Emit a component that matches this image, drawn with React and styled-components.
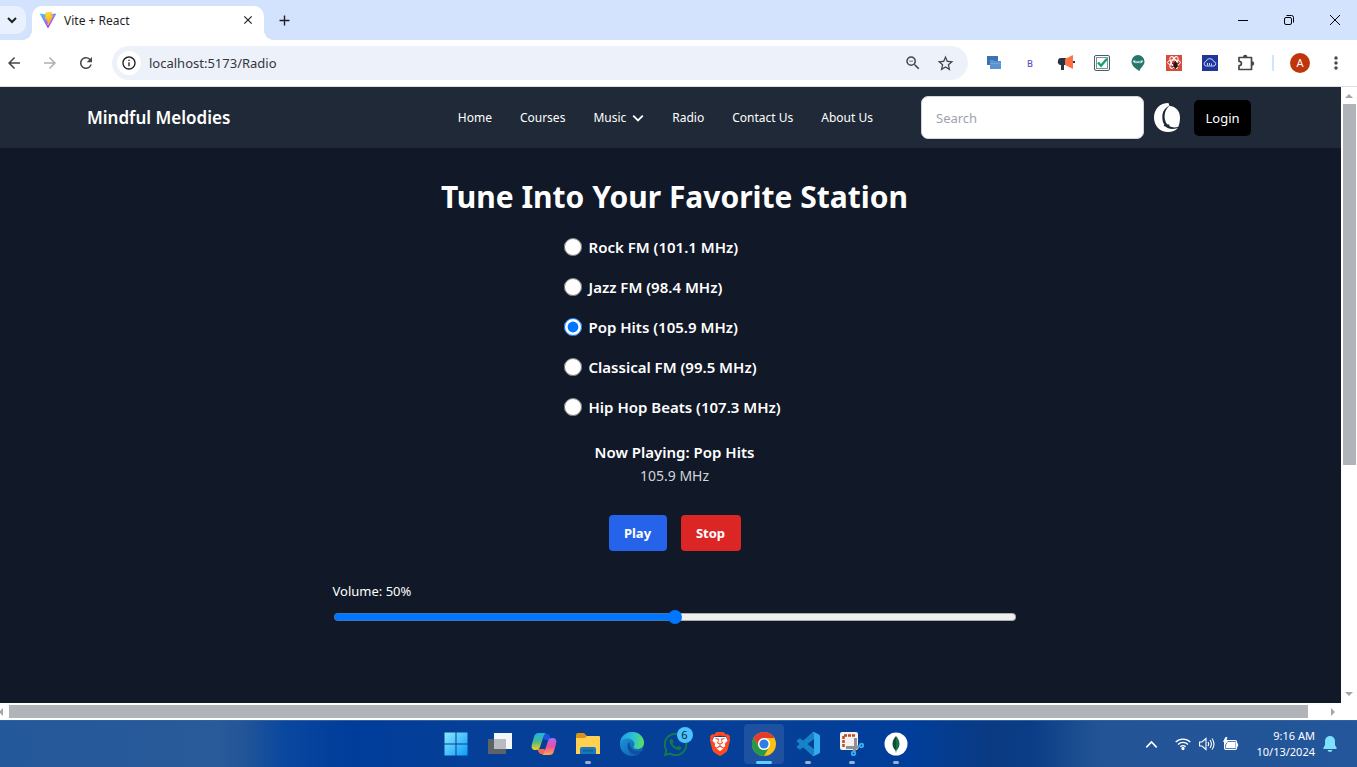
import React, { useState } from "react";
import styled, { createGlobalStyle } from "styled-components";
import {
  MdArrowBack, MdArrowForward, MdRefresh, MdInfoOutline, MdOutlineZoomOut,
  MdStarOutline, MdMoreVert, MdClose, MdAdd,
} from "react-icons/md";
import { FaWhatsapp } from "react-icons/fa";
import { SiBrave } from "react-icons/si";

const GlobalStyle = createGlobalStyle`
  * { box-sizing: border-box; }
  body { margin: 0; font-family: "Noto Sans", "Open Sans", sans-serif; }
  button { font: inherit; border: 0; padding: 0; background: none; cursor: pointer; }
  a { color: inherit; text-decoration: none; }
  svg { display: block; flex: none; }
`;

const Screen = styled.div`
  min-height: 100vh;
  display: flex;
  flex-direction: column;
  background: #fff;
`;

/* ---------- browser chrome ---------- */

const TabStrip = styled.div`
  height: 40px;
  display: flex;
  align-items: flex-end;
  background: #d3e2fd;
`;

const TabSearch = styled.button`
  width: 26px;
  height: 28px;
  margin-bottom: 6px;
  padding-right: 2px;
  display: flex;
  align-items: center;
  justify-content: center;
  border-radius: 0 10px 10px 0;
  background: #e9f0fe;
  color: #1f1f1f;
`;

const Tab = styled.div`
  position: relative;
  width: 232px;
  height: 34px;
  margin-left: 6px;
  padding: 0 10px 6px 8px;
  display: flex;
  align-items: center;
  gap: 8px;
  border-radius: 10px 10px 0 0;
  background: #fff;
  color: #1f1f1f;
  font-size: 12px;

  &::before,
  &::after {
    content: "";
    position: absolute;
    bottom: 0;
    width: 10px;
    height: 10px;
  }
  &::before {
    left: -10px;
    background: radial-gradient(circle at 0 0, transparent 10px, #fff 10px);
  }
  &::after {
    right: -10px;
    background: radial-gradient(circle at 100% 0, transparent 10px, #fff 10px);
  }
`;

const TabTitle = styled.span`
  flex: 1;
`;

const IconButton = styled.button`
  display: flex;
  align-items: center;
  justify-content: center;
  width: ${(p) => p.$size || 16}px;
  height: ${(p) => p.$size || 16}px;
  color: ${(p) => p.$color || "#1f1f1f"};
`;

const NewTab = styled(IconButton)`
  margin: 0 auto 12px 12px;
`;

const WindowControls = styled.div`
  align-self: stretch;
  display: flex;
`;

const WindowButton = styled.button`
  width: 46px;
  padding-left: 2px;
  display: flex;
  align-items: center;
  justify-content: center;
`;

const Toolbar = styled.div`
  height: 47px;
  padding: 0 12px 0 5px;
  display: flex;
  align-items: center;
  background: #fff;
  border-bottom: 1px solid #dcdfe4;
`;

const NavButtons = styled.div`
  display: flex;
  gap: 18px;
  margin-right: 17px;
`;

const AddressBar = styled.div`
  flex: 1;
  height: 34px;
  padding: 0 14px 0 5px;
  display: flex;
  align-items: center;
  gap: 14px;
  border-radius: 17px;
  background: #edf1fa;
`;

const SiteInfo = styled.button`
  width: 24px;
  height: 24px;
  display: flex;
  align-items: center;
  justify-content: center;
  border-radius: 50%;
  background: #fff;
  color: #1f1f1f;
`;

const AddressInput = styled.input`
  flex: 1;
  min-width: 0;
  margin-left: -6px;
  padding: 0;
  border: 0;
  outline: 0;
  background: transparent;
  color: #33363b;
  font: 13px "Noto Sans", sans-serif;
`;

const Extensions = styled.div`
  display: flex;
  align-items: center;
  gap: 16px;
  margin: 0 16px;
`;

const LetterExtension = styled(IconButton)`
  font-size: 9px;
  font-weight: 500;
`;

const Divider = styled.span`
  width: 2px;
  height: 16px;
  background: #d3e2fd;
`;

const Profile = styled.button`
  width: 20px;
  height: 20px;
  margin: 0 17px 0 16px;
  border-radius: 50%;
  background: #bf360c;
  color: #fff;
  font-size: 11px;
  line-height: 20px;
`;

/* ---------- scrollable page frame ---------- */

const Viewport = styled.div`
  flex: 1;
  display: grid;
  grid-template-columns: minmax(0, 1fr) 16px;
  grid-template-rows: 1fr 17px;
`;

const Site = styled.div`
  background: #111827;
  color: #fff;
`;

const VerticalBar = styled.div`
  display: flex;
  flex-direction: column;
  align-items: center;
  gap: 4px;
  padding: 5px 0;
`;

const VerticalThumb = styled.div`
  width: 13px;
  height: 361px;
  margin-bottom: auto;
  background: #b0b3b8;
`;

const HorizontalBar = styled.div`
  display: flex;
  align-items: center;
  padding-right: 4px;
  gap: 6px;
`;

const HorizontalThumb = styled.div`
  flex: 1;
  height: 13px;
  margin-right: 15px;
  background: #b0b3b8;
`;

/* ---------- site ---------- */

const Header = styled.header`
  min-height: 61px;
  padding: 0 90px 0 87px;
  display: flex;
  align-items: center;
  background: #1f2937;
`;

const Brand = styled.a`
  margin-right: auto;
  font-size: 17px;
  font-weight: 600;
`;

const Menu = styled.nav`
  display: flex;
  align-items: center;
  gap: 28px;
  margin-right: 48px;
  font-size: 12px;
`;

const MenuLink = styled.a`
  display: flex;
  align-items: center;
  gap: 6px;
`;

const Search = styled.input`
  width: 223px;
  height: 43px;
  padding: 0 14px;
  border: 1px solid #d1d5db;
  border-radius: 7px;
  background: #fff;
  font: 13px "Noto Sans", sans-serif;
  &::placeholder { color: #9ca3af; }
`;

const ThemeToggle = styled.button`
  margin: 0 14px 0 10px;
`;

const LoginButton = styled.button`
  width: 57px;
  height: 36px;
  border-radius: 5px;
  background: #000;
  color: #fff;
  font-size: 13px;
`;

const Main = styled.main`
  display: flex;
  flex-direction: column;
  align-items: center;
  padding: 29px 0 60px 8px;
`;

const Title = styled.h1`
  margin: 0 0 10px;
  font-size: 30px;
  line-height: 40px;
  font-weight: 700;
`;

const Stations = styled.div`
  width: 222px;
  display: flex;
  flex-direction: column;
`;

const Station = styled.label`
  height: 40px;
  display: flex;
  align-items: center;
  gap: 7px;
  font-size: 15px;
  font-weight: 600;
  white-space: nowrap;
`;

const Radio = styled.input`
  width: 18px;
  height: 18px;
  margin: 0;
  accent-color: #0075ff;
`;

const NowPlaying = styled.h2`
  margin: 12px 0 0;
  font-size: 15px;
  line-height: 26px;
  font-weight: 600;
`;

const Frequency = styled.p`
  margin: 0;
  font-size: 14px;
  line-height: 22px;
  color: #d1d5db;
`;

const Controls = styled.div`
  display: flex;
  gap: 14px;
  margin: 28px 0;
`;

const ControlButton = styled.button`
  width: ${(p) => p.$width}px;
  height: 36px;
  border-radius: 4px;
  background: ${(p) => p.$color};
  color: #fff;
  font-size: 13px;
  font-weight: 700;
`;

const Volume = styled.div`
  width: 100%;
  max-width: 684px;
`;

const VolumeLabel = styled.label`
  display: block;
  font-size: 13px;
  line-height: 24px;
`;

const Slider = styled.input`
  display: block;
  appearance: none;
  width: calc(100% - 2px);
  height: 14px;
  margin: 7px 1px 0;
  background: transparent;

  &::-webkit-slider-runnable-track {
    height: 8px;
    border: 1px solid rgba(118, 118, 118, 0.55);
    border-radius: 4px;
    background: linear-gradient(to right, #0075ff var(--fill), #efefef var(--fill)) border-box;
  }
  &::-webkit-slider-thumb {
    appearance: none;
    width: 14px;
    height: 14px;
    margin-top: -4px;
    border-radius: 50%;
    background: #0075ff;
  }
`;

/* ---------- taskbar ---------- */

const Taskbar = styled.footer`
  height: 47px;
  padding-right: 6px;
  display: grid;
  grid-template-columns: 1fr auto 1fr;
  border-top: 1px solid #33609f;
  background: linear-gradient(
    to right,
    #23589a 0%, #295a99 16%, #225598 18%, #09479f 21%, #003c9b 26%, #053f97 34%,
    #053f97 58%, #003e9b 67%, #0a3a82 73%, #0a3d86 76%, #225496 81%, #23569a 100%
  );
  color: #fff;
`;

const Apps = styled.div`
  grid-column: 2;
  display: flex;
  align-items: center;
  gap: 4px;
`;

const AppButton = styled.button`
  position: relative;
  width: 40px;
  height: 40px;
  display: flex;
  align-items: center;
  justify-content: center;
  border-radius: 4px;
  background: ${(p) => (p.$active ? "rgba(255,255,255,0.1)" : "none")};
  &::after {
    content: "";
    position: absolute;
    bottom: 0;
    width: ${(p) => (p.$active ? 16 : 6)}px;
    height: 3px;
    border-radius: 2px;
    background: ${(p) => (p.$active ? "#60cdff" : p.$running ? "#9db0d4" : "transparent")};
  }
`;

const Badge = styled.span`
  position: absolute;
  top: 3px;
  right: 3px;
  width: 16px;
  height: 16px;
  border-radius: 50%;
  background: #4cc2ff;
  color: #0a2233;
  font-size: 11px;
  line-height: 16px;
`;

const Tray = styled.div`
  justify-self: end;
  display: flex;
  align-items: center;
  gap: 17px;
  padding-right: 14px;
`;

const StatusIcons = styled.div`
  display: flex;
  gap: 8px;
`;

const ClockGroup = styled.div`
  display: flex;
  align-items: center;
  gap: 8px;
`;

const Clock = styled.time`
  text-align: right;
  font-size: 11px;
  line-height: 16px;
`;

const stations = [
  { name: "Rock FM", frequency: "101.1 MHz" },
  { name: "Jazz FM", frequency: "98.4 MHz" },
  { name: "Pop Hits", frequency: "105.9 MHz" },
  { name: "Classical FM", frequency: "99.5 MHz" },
  { name: "Hip Hop Beats", frequency: "107.3 MHz" },
];

const Chevron = ({ size = 10, width = 2, up }) => (
  <svg width={size} height={size} viewBox="0 0 10 10" fill="none" stroke="currentColor" strokeWidth={width}>
    <path d={up ? "M1 7.2 5 3l4 4.2" : "M1 3l4 4 4-4"} />
  </svg>
);

const Arrow = ({ d, w = 8, h = 8 }) => (
  <svg width={w} height={h} viewBox={`0 0 ${w} ${h}`}><path d={d} fill="#a3a5a8" /></svg>
);

const ViteIcon = () => (
  <svg width="16" height="16" viewBox="0 0 32 32">
    <defs>
      <linearGradient id="va" x1="0" y1="0" x2="0.6" y2="1"><stop stopColor="#41d1ff" /><stop offset="1" stopColor="#bd34fe" /></linearGradient>
      <linearGradient id="vb" x1="0.4" y1="0" x2="0.6" y2="1"><stop stopColor="#ffdd35" /><stop offset="1" stopColor="#ffa800" /></linearGradient>
    </defs>
    <path fill="url(#va)" d="M31.8 4.800 17 31.300a1.200 1.200 0 0 1-2 0L.2 4.800A1.200 1.200 0 0 1 1.400 3L16 5.600 30.500 3a1.200 1.200 0 0 1 1.300 1.800Z" />
    <path fill="url(#vb)" stroke="#ffc21f" strokeWidth="1.500" d="M22.700 0 11.900 2.100a.6.6 0 0 0-.4.400l-.7 11.200a.5.5 0 0 0 .6.500l3-.700c.3 0 .5.200.5.500l-.9 4.400c0 .300.200.500.500.500l1.900-.600c.300 0 .6.200.5.500l-1.400 6.800c-.1.400.5.700.7.300L25.500 7.100c.2-.300-.1-.700-.5-.600l-3.200.6c-.300 0-.6-.200-.5-.5l2-6.100c.1-.3-.2-.6-.6-.5Z" />
  </svg>
);

const ScreensIcon = () => (
  <svg width="16" height="16" viewBox="0 0 16 16">
    <path fill="#3b73b0" d="M1 1h11v9H1z" />
    <path fill="#5b92d4" d="M4 5h3l1 1h7v8H4z" />
    <path fill="#6fa3df" d="M4 8h11v1H4z" />
  </svg>
);

const MegaphoneIcon = () => (
  <svg width="18" height="16" viewBox="0 0 18 16">
    <path fill="#263442" d="M1 6a3 3 0 0 1 3-3h5v7H7v5H4v-5a3 3 0 0 1-3-4Z" />
    <path fill="#ff7043" d="m8 4 8-4v14l-8-4Z" />
    <path fill="#263442" d="M16 6h2v2h-2z" />
  </svg>
);

const CheckIcon = () => (
  <svg width="16" height="16" viewBox="0 0 16 16" fill="none">
    <rect x=".5" y=".5" width="15" height="15" rx="1.500" stroke="#45606b" />
    <rect x="2.500" y="2.500" width="11" height="11" stroke="#7b9099" />
    <path d="m4 7.500 3 3.200 6-7" stroke="#10a469" strokeWidth="2.400" />
  </svg>
);

const PinIcon = () => (
  <svg width="16" height="16" viewBox="0 0 16 16">
    <path fill="#26766c" d="M8 0a6.500 6.500 0 0 1 6.500 6.500c0 4-4 6-5 9.500C6 14 1.500 11 1.500 6.500A6.500 6.500 0 0 1 8 0Z" />
    <path fill="#dff0ee" d="M3 5.500c1.500-.3 3 .2 5 1 2-.8 3.500-1.300 5-1-.2 1.800-1.200 2.800-3 2.800-1 0-1.600-.4-2-.8-.4.400-1 .8-2 .8-1.800 0-2.800-1-3-2.800Z" />
    <circle cx="6" cy="7" r=".8" fill="#26766c" /><circle cx="10" cy="7" r=".8" fill="#26766c" />
  </svg>
);

const ReactBugIcon = () => (
  <svg width="16" height="16" viewBox="0 0 16 16" fill="none">
    <path fill="#d84a3c" d="M0 0h16v16H0z" />
    <g stroke="#fff" strokeWidth="1"><ellipse cx="8" cy="7.500" rx="6.500" ry="2.600" /><ellipse cx="8" cy="7.500" rx="6.500" ry="2.600" transform="rotate(60 8 7.500)" /><ellipse cx="8" cy="7.500" rx="6.500" ry="2.600" transform="rotate(120 8 7.500)" /></g>
    <ellipse cx="9.500" cy="10" rx="2.200" ry="3" fill="#2b1715" />
    <path stroke="#2b1715" strokeWidth=".8" d="m6 8 7 4M6 12l7-4M9.500 6v8" />
  </svg>
);

const CloudIcon = () => (
  <svg width="16" height="16" viewBox="0 0 16 16" fill="none">
    <path fill="#1e3799" d="M0 0h16v16H0z" />
    <path stroke="#c5d3ff" d="M4 11a2.300 2.300 0 0 1 0-4.500 4 4 0 0 1 7.700 0A2.300 2.300 0 0 1 12 11Z" />
    <path stroke="#c5d3ff" d="M5.500 8v2.500M7.500 8v2.500M9.500 8.500v2" />
  </svg>
);

const PuzzleIcon = () => (
  <svg width="18" height="18" viewBox="0 0 18 18">
    <path fill="none" stroke="#474747" strokeWidth="1.700" strokeLinejoin="round" d="M2 3.500h12.500v12H2v-3.800c1.500 0 2.400-.9 2.400-2.200S3.500 7.300 2 7.300Z" />
    <path fill="#474747" d="M6 3a2.200 2.200 0 0 1 4.400 0ZM15 7.300a2.200 2.200 0 0 1 0 4.400Z" />
  </svg>
);

const MoonIcon = () => (
  <svg width="26" height="29" viewBox="0 0 26 29">
    <path fill="#fff" d="M14.500 0C6 0 0 6 0 14.500S6 29 14 29c4.500 0 7.500-1.600 9.800-4C25.300 21.500 26 18.500 26 14.500 26 8 22 3.500 15.500 3Z" />
    <path fill="#1f2937" d="M15.500 2.500C10.500 5 8.300 9 8.300 14c0 3 .6 5.500 2 7.500l-.6 1.500 1.800.6c2.500 2.600 7 3.200 12.300 1.400l.6-1.200c-3.400 1-6.400.9-8.900-.8l-.4-1.600-2-.2C9.400 16.500 9.500 8 15.500 2.500Z" />
  </svg>
);

const WindowsIcon = () => (
  <svg width="24" height="24" viewBox="0 0 24 24">
    <defs><linearGradient id="win" x1="0" y1="0" x2="1" y2="1"><stop stopColor="#8ceaff" /><stop offset="1" stopColor="#0a9cf5" /></linearGradient></defs>
    <path fill="url(#win)" d="M.5.500h11v11H.500zM12.500.500h11v11h-11zM.500 12.500h11v11H.500zM12.500 12.500h11v11h-11z" />
  </svg>
);

const TaskViewIcon = () => (
  <svg width="24" height="24" viewBox="0 0 24 24">
    <path fill="#5d6268" d="M0 7h18v15H0z" />
    <path fill="#f5f6f8" d="M6 1h18v16H6z" />
    <path fill="#b8bcc2" d="M6 7h12v10H6z" />
  </svg>
);

const CopilotIcon = () => (
  <svg width="26" height="24" viewBox="0 0 26 24">
    <defs>
      <linearGradient id="ca" x1="0" y1="0" x2="0" y2="1"><stop stopColor="#19b4f0" /><stop offset=".5" stopColor="#49b98e" /><stop offset="1" stopColor="#f5d21c" /></linearGradient>
      <linearGradient id="cb" x1="0" y1="0" x2="0" y2="1"><stop stopColor="#a46df2" /><stop offset=".5" stopColor="#ec4f9c" /><stop offset="1" stopColor="#ffa553" /></linearGradient>
    </defs>
    <path fill="#1a55db" d="M9 2h7c2 0 2.500 1 3 3l1 3h-6Z" />
    <path fill="#f26a4f" d="M6 17h7l5 5h-7c-3 0-3-2-5-5Z" />
    <path fill="url(#ca)" d="M8 1h7c-2 1-2.500 3-3 5l-3 9c-.6 2-2 3-4 3-4 0-5-2-4-6l2-7c1-3 2-4 5-4Z" />
    <path fill="url(#cb)" d="M18 23h-7c2-1 2.500-3 3-5l3-9c.6-2 2-3 4-3 4 0 5 2 4 6l-2 7c-1 3-2 4-5 4Z" />
  </svg>
);

const FolderIcon = () => (
  <svg width="24" height="24" viewBox="0 0 24 24">
    <path fill="#d99416" d="M0 3q0-2 2-2h6l3 3v6H0z" />
    <path fill="#ffd152" d="M0 6h9l2-2h12q1 0 1 1v17H0z" />
    <path fill="#1978bd" d="M4 22v-5q0-2 2-2h12q2 0 2 2v5z" />
    <path fill="#135f9b" d="M7 18h10v1.500H7z" />
  </svg>
);

const EdgeIcon = () => (
  <svg width="24" height="24" viewBox="0 0 24 24">
    <defs>
      <linearGradient id="ea" x1="0" y1=".4" x2="1" y2=".5"><stop stopColor="#239be8" /><stop offset=".6" stopColor="#31c5cb" /><stop offset="1" stopColor="#62de56" /></linearGradient>
      <linearGradient id="eb" x1="0" y1="0" x2="1" y2="1"><stop stopColor="#1b9de2" /><stop offset="1" stopColor="#0b57a8" /></linearGradient>
    </defs>
    <circle cx="12" cy="12" r="12" fill="url(#eb)" />
    <path fill="url(#ea)" d="M0 11C1 4 6 0 12 0c7 0 12 5 12 10.500 0 4-3 6.500-6.500 6.500-2.500 0-4-1-4-2 0-.8 1-1.300 1-3C14.500 9 11 6.500 7.500 6.500 4 6.500 1 8.500 0 11Z" />
    <path fill="#124f9e" d="M9.500 10C6 12 7 20 13.500 22.500c3 .5 6-1 8.500-4-6 2-12-.5-12.500-8.500Z" />
  </svg>
);

const BraveIcon = () => (
  <svg width="22" height="24" viewBox="1 0 22 24">
    <path fill="#fff" d="M6 5h12l2 4-4 9-4 3-4-3-4-9Z" />
    <SiBrave color="#fb4a24" size={24} />
  </svg>
);

const ChromeIcon = () => (
  <svg width="24" height="24" viewBox="0 0 24 24">
    <circle cx="12" cy="12" r="12" fill="#fbc116" />
    <path fill="#e33b2e" d="M1.600 6A12 12 0 0 1 22.400 6H12a6 6 0 0 0-5.200 9Z" />
    <path fill="#229a48" d="M1.600 6A12 12 0 0 0 12 24l5.200-9A6 6 0 0 1 6.800 15Z" />
    <circle cx="12" cy="12" r="6" fill="#fff" /><circle cx="12" cy="12" r="4.600" fill="#2f7de9" />
  </svg>
);

const CodeIcon = () => (
  <svg width="24" height="24" viewBox="0 0 24 24">
    <path fill="#1683c7" d="M18 0v7L4.600 17.200q-.7.500-1.400 0L1 15.800q-.7-.8 0-1.500L16.500.3Z" />
    <path fill="#1683c7" d="M18 24v-7L4.600 6.800q-.7-.5-1.400 0L1 8.200q-.7.800 0 1.500l15.500 14Z" />
    <path fill="#35a9ef" d="m18 0 5 2.500q1 .5 1 1.500v16q0 1-1 1.500L18 24q-.7.100-1.300-.4l1.300-1V1.400l-1.300-1Q17.300-.1 18 0Z" />
  </svg>
);

const SnipIcon = () => (
  <svg width="24" height="24" viewBox="0 0 24 24">
    <rect width="18" height="18" rx="2" fill="#f4f2f1" />
    <path fill="none" stroke="#c14a26" strokeWidth="2.500" strokeDasharray="3 1" d="M3.500 15V3.500H15" />
    <path fill="none" stroke="#8d9197" strokeWidth="3" d="M15.500 6v9.500H6M15 15l4 0M15 15l-1 5" />
    <g fill="none" stroke="#35a9ef" strokeWidth="2"><circle cx="21.500" cy="13.500" r="1.700" /><circle cx="13.500" cy="21.500" r="1.700" /></g>
  </svg>
);

const MongoIcon = () => (
  <svg width="24" height="24" viewBox="0 0 24 24">
    <circle cx="12" cy="12" r="11.500" fill="#fff" />
    <path fill="#157248" d="M12 4c2.500 3 3.500 5 3.500 8 0 3-1.500 5-3 6.500L12 21Z" />
    <path fill="#0b5234" d="M12 4C9.500 7 8.500 9 8.500 12c0 3 1.500 5 3 6.500L12 21Z" />
  </svg>
);

const WifiIcon = () => (
  <svg width="16" height="14" viewBox="0 0 16 14" fill="none" stroke="#fff" strokeWidth="1.300">
    <path d="M.7 5a10.500 10.500 0 0 1 14.600 0M3 7.500a7 7 0 0 1 10 0M5.300 9.800a4 4 0 0 1 5.400 0" /><circle cx="8" cy="11.500" r="1" fill="#fff" />
  </svg>
);

const SoundIcon = () => (
  <svg width="16" height="14" viewBox="0 0 16 14" fill="none" stroke="#fff" strokeWidth="1.100">
    <path d="M.600 5v4H3l4 3.500v-11L3 5ZM9 5q1.300 2 0 4M11 3q2.800 4 0 8M13 1.500q4 5.500 0 11" />
  </svg>
);

const BatteryIcon = () => (
  <svg width="16" height="14" viewBox="0 0 16 14" fill="none" stroke="#fff" strokeWidth="1.200">
    <rect x="1.600" y="3.600" width="12" height="8.800" rx="1.500" /><path fill="#fff" d="M5 5.500h7v5H3.500v-2ZM14.500 6.500v3" /><path fill="#fff" strokeWidth=".8" d="M3 0 .500 4.500h2L1.500 8 5 3.500H3L4 0Z" />
  </svg>
);

const BellIcon = () => (
  <svg width="14" height="16" viewBox="0 0 14 16">
    <path fill="#7fe0fb" d="M7 0a5 5 0 0 1 5 5v4l1.700 3q.3 1-.7 1H1q-1 0-.700-1L2 9V5a5 5 0 0 1 5-5ZM4.500 14h5q-.5 2-2.500 2t-2.500-2Z" />
  </svg>
);

const taskApps = [
  { name: "Start", icon: <WindowsIcon /> },
  { name: "Task view", icon: <TaskViewIcon /> },
  { name: "Copilot", icon: <CopilotIcon /> },
  { name: "File Explorer", icon: <FolderIcon />, running: true },
  { name: "Edge", icon: <EdgeIcon /> },
  { name: "WhatsApp", icon: <FaWhatsapp size={27} color="#15794f" />, badge: "6" },
  { name: "Brave", icon: <BraveIcon /> },
  { name: "Chrome", icon: <ChromeIcon />, active: true },
  { name: "Visual Studio Code", icon: <CodeIcon />, running: true },
  { name: "Snipping Tool", icon: <SnipIcon />, running: true },
  { name: "MongoDB Compass", icon: <MongoIcon />, running: true },
];

function BrowserChrome() {
  return (
    <>
      <TabStrip>
        <TabSearch aria-label="Search tabs"><Chevron /></TabSearch>
        <Tab>
          <ViteIcon />
          <TabTitle>Vite + React</TabTitle>
          <IconButton aria-label="Close tab" $size={12}><MdClose size={14} /></IconButton>
        </Tab>
        <NewTab aria-label="New tab"><MdAdd size={17} /></NewTab>
        <WindowControls>
          <WindowButton aria-label="Minimize"><svg width="10" height="10" viewBox="0 0 10 10" stroke="#000"><path d="M0 5.500h10" /></svg></WindowButton>
          <WindowButton aria-label="Restore"><svg width="10" height="10" viewBox="0 0 10 10" fill="none" stroke="#000"><rect x=".5" y="2.500" width="7" height="7" rx="1.500" /><path d="M2.500.500H7.500q2 0 2 2V7.500" /></svg></WindowButton>
          <WindowButton aria-label="Close"><svg width="10" height="10" viewBox="0 0 10 10" stroke="#000"><path d="m0 0 10 10M10 0 0 10" /></svg></WindowButton>
        </WindowControls>
      </TabStrip>
      <Toolbar>
        <NavButtons>
          <IconButton aria-label="Back" $size={18} $color="#474747"><MdArrowBack size={18} /></IconButton>
          <IconButton aria-label="Forward" $size={18} $color="#b0b0b0"><MdArrowForward size={18} /></IconButton>
          <IconButton aria-label="Reload" $size={18} $color="#474747"><MdRefresh size={18} /></IconButton>
        </NavButtons>
        <AddressBar>
          <SiteInfo aria-label="Site information"><MdInfoOutline size={16} /></SiteInfo>
          <AddressInput aria-label="Address" defaultValue="localhost:5173/Radio" />
          <IconButton aria-label="Zoom" $size={18} $color="#474747"><MdOutlineZoomOut size={18} /></IconButton>
          <IconButton aria-label="Bookmark" $size={18} $color="#474747"><MdStarOutline size={19} /></IconButton>
        </AddressBar>
        <Extensions>
          <IconButton aria-label="Screens" $size={20}><ScreensIcon /></IconButton>
          <LetterExtension $size={20} $color="#5b4fc4">B</LetterExtension>
          <IconButton aria-label="Announcements" $size={20}><MegaphoneIcon /></IconButton>
          <IconButton aria-label="Tasks" $size={20}><CheckIcon /></IconButton>
          <IconButton aria-label="Places" $size={20}><PinIcon /></IconButton>
          <IconButton aria-label="React tools" $size={20}><ReactBugIcon /></IconButton>
          <IconButton aria-label="Cloud" $size={20}><CloudIcon /></IconButton>
          <IconButton aria-label="Extensions" $size={20}><PuzzleIcon /></IconButton>
        </Extensions>
        <Divider />
        <Profile>A</Profile>
        <IconButton aria-label="More" $size={18} $color="#474747"><MdMoreVert size={20} /></IconButton>
      </Toolbar>
    </>
  );
}

function SiteHeader() {
  return (
    <Header>
      <Brand href="#">Mindful Melodies</Brand>
      <Menu>
        <MenuLink href="#">Home</MenuLink>
        <MenuLink href="#">Courses</MenuLink>
        <MenuLink href="#">Music <Chevron size={12} width={1.5} /></MenuLink>
        <MenuLink href="#">Radio</MenuLink>
        <MenuLink href="#">Contact Us</MenuLink>
        <MenuLink href="#">About Us</MenuLink>
      </Menu>
      <Search type="search" aria-label="Search" placeholder="Search" />
      <ThemeToggle aria-label="Toggle theme"><MoonIcon /></ThemeToggle>
      <LoginButton>Login</LoginButton>
    </Header>
  );
}

function RadioPage() {
  const [current, setCurrent] = useState(2);
  const [volume, setVolume] = useState(50);
  const station = stations[current];
  return (
    <Main>
      <Title>Tune Into Your Favorite Station</Title>
      <Stations role="radiogroup" aria-label="Station">
        {stations.map((s, i) => (
          <Station key={s.name}>
            <Radio type="radio" name="station" checked={i === current} onChange={() => setCurrent(i)} />
            {`${s.name} (${s.frequency})`}
          </Station>
        ))}
      </Stations>
      <NowPlaying>{`Now Playing: ${station.name}`}</NowPlaying>
      <Frequency>{station.frequency}</Frequency>
      <Controls>
        <ControlButton $width={58} $color="#2563eb">Play</ControlButton>
        <ControlButton $width={60} $color="#dc2626">Stop</ControlButton>
      </Controls>
      <Volume>
        <VolumeLabel htmlFor="volume">{`Volume: ${volume}%`}</VolumeLabel>
        <Slider
          id="volume"
          type="range"
          min="0"
          max="100"
          value={volume}
          onChange={(e) => setVolume(Number(e.target.value))}
          style={{ "--fill": `${volume}%` }}
        />
      </Volume>
    </Main>
  );
}

export default function App() {
  return (
    <Screen>
      <GlobalStyle />
      <BrowserChrome />
      <Viewport>
        <Site>
          <SiteHeader />
          <RadioPage />
        </Site>
        <VerticalBar>
          <Arrow d="M0 6l4-4 4 4z" />
          <VerticalThumb />
          <Arrow d="M0 2l4 4 4-4z" />
        </VerticalBar>
        <HorizontalBar>
          <Arrow w={3} d="M3 0v8L0 5V3z" />
          <HorizontalThumb />
          <Arrow d="M2 0l4 4-4 4z" />
        </HorizontalBar>
      </Viewport>
      <Taskbar>
        <Apps>
          {taskApps.map((a) => (
            <AppButton key={a.name} aria-label={a.name} $active={a.active} $running={a.running}>
              {a.icon}
              {a.badge && <Badge>{a.badge}</Badge>}
            </AppButton>
          ))}
        </Apps>
        <Tray>
          <Chevron up size={13} width={1.2} />
          <StatusIcons>
            <WifiIcon />
            <SoundIcon />
            <BatteryIcon />
          </StatusIcons>
          <ClockGroup>
            <Clock>9:16 AM<br />10/13/2024</Clock>
            <BellIcon />
          </ClockGroup>
        </Tray>
      </Taskbar>
    </Screen>
  );
}
